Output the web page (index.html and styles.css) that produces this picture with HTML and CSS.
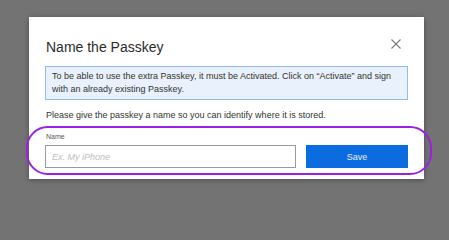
FILE: index.html
```html
<!DOCTYPE html>
<html>
<head>
<meta charset="utf-8">
<link rel="stylesheet" href="styles.css">
</head>
<body>
<div class="dialog">
  <div class="header">
    <h1 class="title">Name the Passkey</h1>
    <svg class="close" width="10" height="10" viewBox="0 0 10 10"><path d="M0.5 0.5 L9.5 9.5 M9.5 0.5 L0.5 9.5" stroke="#7a7a7a" stroke-width="1.1" fill="none"/></svg>
  </div>
  <div class="info">To be able to use the extra Passkey, it must be Activated. Click on “Activate” and sign with an already existing Passkey.</div>
  <p class="hint">Please give the passkey a name so you can identify where it is stored.</p>
  <div class="field-label">Name</div>
  <div class="row">
    <input class="name-input" type="text" placeholder="Ex. My iPhone">
    <button class="save">Save</button>
  </div>
</div>
<div class="highlight"></div>
</body>
</html>
```

FILE: styles.css
```css
html, body {
  margin: 0;
  padding: 0;
}
body {
  background: #737373;
  width: 449px;
  height: 204px;
  overflow: hidden;
  position: relative;
  font-family: "Liberation Sans", Arial, sans-serif;
}
.dialog {
  margin: 17px 0 0 29px;
  width: 395px;
  height: 162px;
  box-sizing: border-box;
  background: #fff;
  box-shadow: 0 1px 5px rgba(0, 0, 0, 0.35);
  padding: 21px 16px 0 16px;
}
.header {
  display: flex;
  align-items: flex-start;
  justify-content: space-between;
  height: 18px;
}
.title {
  margin: 0;
  font-size: 14px;
  line-height: 18px;
  font-weight: normal;
  color: #2b2b2b;
  padding-left: 1px;
}
.close {
  margin-right: 7px;
  margin-top: 1px;
}
.info {
  margin-top: 10px;
  width: 363px;
  box-sizing: border-box;
  border: 1px solid #8fbcf2;
  background: #e9f1fd;
  padding: 3px 6px 3px 6px;
  font-size: 9px;
  line-height: 13px;
  color: #333;
}
.hint {
  margin: 9px 0 0 1px;
  font-size: 9px;
  line-height: 13px;
  color: #333;
}
.field-label {
  margin: 10px 0 0 1px;
  font-size: 7px;
  line-height: 9px;
  color: #555;
}
.row {
  display: flex;
  margin-top: 4px;
  gap: 10px;
}
.name-input {
  width: 251px;
  height: 23px;
  box-sizing: border-box;
  border: 1px solid #9a9a9a;
  border-radius: 0;
  padding: 0 6px;
  margin: 0;
  font-family: "Liberation Sans", Arial, sans-serif;
  font-size: 9px;
  outline: none;
}
.name-input::placeholder {
  color: #bdbdbd;
  font-style: italic;
}
.save {
  width: 102px;
  height: 23px;
  margin: 0;
  border: none;
  border-radius: 0;
  background: #0b6ce0;
  color: #e9f2ff;
  font-family: "Liberation Sans", Arial, sans-serif;
  font-size: 9px;
  padding: 0;
}
.highlight {
  position: absolute;
  left: 26px;
  top: 126px;
  width: 406px;
  height: 49px;
  box-sizing: border-box;
  border: 2px solid #9b20e3;
  border-radius: 22px;
}
```
